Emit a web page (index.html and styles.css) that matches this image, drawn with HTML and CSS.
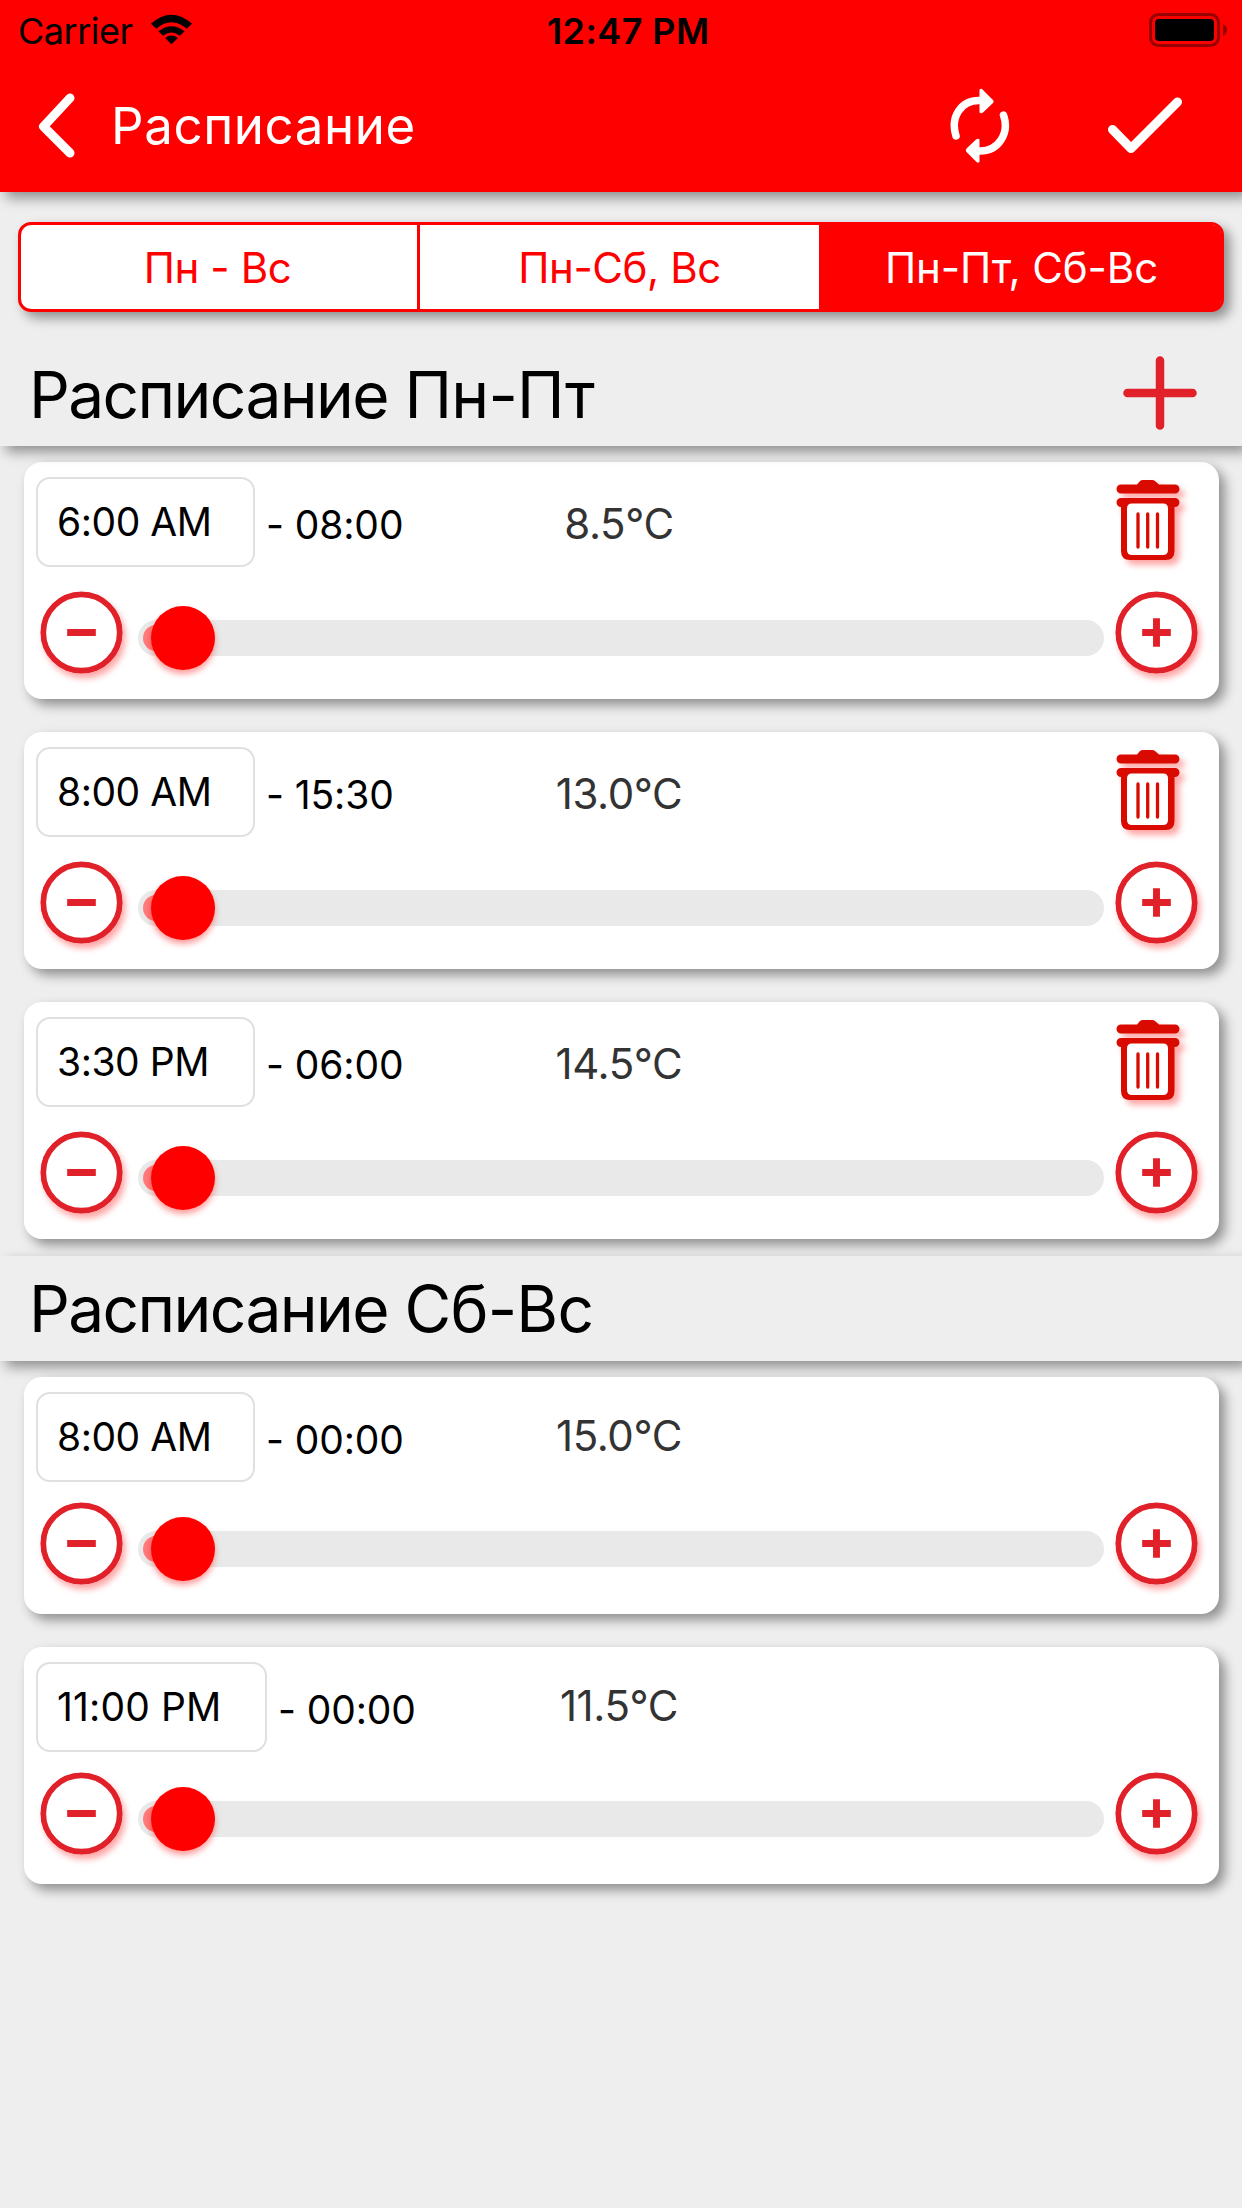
FILE: index.html
```html
<!DOCTYPE html>
<html lang="ru">
<head>
<meta charset="utf-8">
<title>Расписание</title>
<link rel="stylesheet" href="styles.css">
</head>
<body>
<svg class="defs" width="0" height="0" aria-hidden="true">
  <symbol id="minus" viewBox="0 0 84 84"><circle cx="42" cy="42" r="38.7" fill="#fff" stroke="#e12129" stroke-width="5.8"/><path d="M27.500 42h29" stroke="#e12129" stroke-width="7"/></symbol>
  <symbol id="plus" viewBox="0 0 84 84"><circle cx="42" cy="42" r="38.7" fill="#fff" stroke="#e12129" stroke-width="5.8"/><path d="M27.500 42h29M42 27.500v29" stroke="#e12129" stroke-width="7"/></symbol>
  <symbol id="trash" viewBox="0 0 64 82"><rect x="10" y="23" width="43" height="54" fill="#fff"/><path fill="#d90b00" fill-rule="evenodd" d="M5 5.500H21L24 2q1-1 3-1H36q2 0 3 1L43 5.500H59a4.500 4.500 0 0 1 0 9H5a4.500 4.500 0 0 1 0-9ZM5 19H59a4.500 4.500 0 0 1 0 9H58.500V72q0 9-9 9H14q-9 0-9-9V28a4.500 4.500 0 0 1 0-9ZM16 24.500q-5 0-5 5V71q0 5 5 5H47q5 0 5-5V29.500q0-5-5-5Z"/><path d="M22 35v33M31.700 35v33M41.500 35v33" stroke="#d90b00" stroke-width="3.300" stroke-linecap="round"/></symbol>
</svg>

<header class="header">
  <div class="status">
    <div class="carrier"><span class="carrier-name">Carrier</span>
      <svg class="wifi" viewBox="0 0 44 38" preserveAspectRatio="none"><path d="M1 12Q22-8 43 12L37.500 17.500Q22 3 6.500 17.500Z"/><path d="M8.500 20.500Q22 9 35.500 20.500L30.500 25.500Q22 18 13.500 25.500Z"/><path d="M15.500 28Q22 22.500 28.500 28L22 35Z"/></svg>
    </div>
    <div class="clock">12:47 PM</div>
    <svg class="battery" viewBox="0 0 80 42"><rect x="1.500" y="1.500" width="68" height="31" rx="8" fill="none" stroke="#900" stroke-width="3"/><rect x="6" y="6" width="59" height="22" rx="4"/><path d="M74 11q4 2 4 6t-4 6Z" fill="#900"/></svg>
  </div>
  <div class="nav">
    <svg class="back" viewBox="0 0 40 66"><path d="M34 5L7.500 33.500L34 60" /></svg>
    <h1 class="title">Расписание</h1>
    <svg class="refresh" viewBox="0 0 60 76"><g fill="none" stroke="#fff" stroke-width="7.500" stroke-linecap="round"><path d="M6 48C0 29 11 12.500 29 12.500"/><path d="M53.500 27C60 46 48 63 30 63"/></g><path fill="#fff" d="M29.500 1.500q2-1.500 3.500.5L43 12q1.500 1.500 0 3L33 24.500q-2 1.500-3.500 0ZM29.500 74q-2 1.500-3.500-.5L16.500 64q-1.500-1.500 0-3.500L26 51.500q2-1.500 3.500 0Z"/></svg>
    <svg class="check" viewBox="0 0 76 58"><path d="M5.500 32.500L24 51.500L70.500 5"/></svg>
  </div>
</header>

<main>
  <nav class="segments">
    <div class="segment">Пн - Вс</div>
    <div class="segment">Пн-Сб, Вс</div>
    <div class="segment active">Пн-Пт, Сб-Вс</div>
  </nav>

  <section>
    <div class="section-head first"><h2>Расписание <span class="days">Пн-Пт</span></h2><svg class="add" viewBox="0 0 74 74"><path d="M4.500 37h65M37 4.500v65"/></svg></div>
    <div class="cards">
      <article class="card">
        <div class="info"><div class="range"><div class="time">6:00 AM</div><div class="until">- 08:00</div></div><div class="temp">8.5°C</div><svg class="trash"><use href="#trash"/></svg></div>
        <div class="control"><svg class="step"><use href="#minus"/></svg><div class="track"><div class="fill"></div><div class="knob"></div></div><svg class="step"><use href="#plus"/></svg></div>
      </article>
      <article class="card">
        <div class="info"><div class="range"><div class="time">8:00 AM</div><div class="until">- 15:30</div></div><div class="temp">13.0°C</div><svg class="trash"><use href="#trash"/></svg></div>
        <div class="control"><svg class="step"><use href="#minus"/></svg><div class="track"><div class="fill"></div><div class="knob"></div></div><svg class="step"><use href="#plus"/></svg></div>
      </article>
      <article class="card">
        <div class="info"><div class="range"><div class="time">3:30 PM</div><div class="until">- 06:00</div></div><div class="temp">14.5°C</div><svg class="trash"><use href="#trash"/></svg></div>
        <div class="control"><svg class="step"><use href="#minus"/></svg><div class="track"><div class="fill"></div><div class="knob"></div></div><svg class="step"><use href="#plus"/></svg></div>
      </article>
    </div>
  </section>

  <section class="weekend">
    <div class="section-head"><h2>Расписание <span class="days">Сб-Вс</span></h2></div>
    <div class="cards">
      <article class="card">
        <div class="info"><div class="range"><div class="time">8:00 AM</div><div class="until">- 00:00</div></div><div class="temp">15.0°C</div></div>
        <div class="control"><svg class="step"><use href="#minus"/></svg><div class="track"><div class="fill"></div><div class="knob"></div></div><svg class="step"><use href="#plus"/></svg></div>
      </article>
      <article class="card">
        <div class="info"><div class="range"><div class="time wide">11:00 PM</div><div class="until">- 00:00</div></div><div class="temp">11.5°C</div></div>
        <div class="control"><svg class="step"><use href="#minus"/></svg><div class="track"><div class="fill"></div><div class="knob"></div></div><svg class="step"><use href="#plus"/></svg></div>
      </article>
    </div>
  </section>
</main>
</body>
</html>
```
FILE: styles.css
```css
* { box-sizing: border-box; }
body { margin: 0; min-height: 2208px; background: #eee; color: #000; font-family: Inter, "Liberation Sans", sans-serif; overflow-x: hidden; }
h1, h2 { margin: 0; font-weight: 400; white-space: nowrap; }
svg { display: block; flex: none; }
.defs { position: absolute; }

.header { height: 192px; background: #f00; box-shadow: 6px 6px 12px rgba(0,0,0,.4); }
.status { display: grid; grid-template-columns: 529px 1fr 80px; height: 60px; padding: 0 13px 0 18px; font-size: 36px; line-height: 62px; }
.carrier { display: flex; gap: 18px; }
.carrier-name { width: 114px; letter-spacing: -.5px; white-space: nowrap; }
.wifi { width: 43px; height: 34px; margin-top: 13px; }
.clock { font-weight: 600; letter-spacing: .4px; white-space: nowrap; }
.battery { width: 80px; height: 42px; margin-top: 13px; }
.nav { display: flex; align-items: flex-start; height: 132px; padding-left: 36px; }
.back { width: 40px; height: 66px; margin-top: 33px; }
.back path, .check path { fill: none; stroke: #fff; stroke-width: 9; stroke-linecap: round; stroke-linejoin: round; }
.title { width: 840px; padding-left: 1px; margin-left: 34px; color: #fff; font-size: 51px; line-height: 131px; letter-spacing: .6px; }
.refresh { width: 60px; height: 76px; margin-top: 28px; }
.check { width: 76px; height: 58px; margin: 37px 0 0 97px; }

.segments { display: grid; grid-template-columns: 396px 402px 402px; height: 90px; margin: 30px 18px 0; border: 3px solid #f00; border-radius: 13px; background: #fff; color: #f00; box-shadow: 6px 6px 12px rgba(0,0,0,.4); font-size: 42px; line-height: 85px; letter-spacing: -.4px; text-align: center; }
.segment:first-child { padding-right: 3px; }
.segment + .segment { border-left: 3px solid #f00; }
.segment.active { background: #f00; color: #fff; border-radius: 0 9px 9px 0; letter-spacing: -.1px; }

.section-head { display: flex; justify-content: space-between; height: 105px; padding: 0 45px 0 29px; background: #eee; box-shadow: 6px 6px 12px rgba(0,0,0,.4); line-height: 105px; }
.section-head h2 { font-size: 64px; letter-spacing: -1.6px; }
.section-head .days { letter-spacing: -.7px; }
.section-head.first { height: 104px; margin-top: 30px; clip-path: inset(0 0 -30px 0); }
.add { width: 74px; height: 74px; margin-top: 14px; }
.add path { stroke: #e12129; stroke-width: 8.5; stroke-linecap: round; }
.cards { display: grid; gap: 33px; padding: 16px 23px 17px 24px; }

.card { height: 237px; padding: 15px 12px 0; background: #fff; border-radius: 18px; box-shadow: 6px 6px 12px rgba(0,0,0,.4); }
.info { display: grid; grid-template-columns: 433px 300px 1fr 91px; height: 90px; white-space: nowrap; }
.range { display: flex; }
.time { width: 219px; height: 90px; padding-left: 19px; border: 2px solid #e0e0e0; border-radius: 14px; font-size: 39px; line-height: 85px; letter-spacing: -.45px; }
.time.wide { width: 231px; letter-spacing: .15px; }
.until { padding: 3px 0 0 11px; font-size: 39px; line-height: 90px; letter-spacing: -.1px; }
.temp { padding-top: 1px; font-size: 42px; line-height: 91px; letter-spacing: -.4px; text-align: center; color: #333; }
.trash { grid-column: 4; width: 64px; height: 82px; margin-top: 2px; filter: drop-shadow(5px 5px 3px rgba(255,0,0,.35)); }
.control { display: flex; padding: 24px 8px 0 4px; }
.step { width: 83px; height: 83px; border-radius: 50%; filter: drop-shadow(3px 5px 3px rgba(255,0,0,.35)); }
.track { position: relative; width: 966px; height: 36px; margin: 29px 11px 0 15px; padding-top: 5px; border-radius: 18px; background: #e9e9e9; }
.fill { width: 60px; height: 26px; margin-left: 5px; border-radius: 13px; background: #ff7b7b; }
.knob { position: absolute; left: 13px; top: -14px; width: 64px; height: 64px; border-radius: 50%; background: #f00; box-shadow: 0 4px 6px rgba(255,0,0,.4); }
.weekend .temp { line-height: 86px; }
.weekend .control { padding-top: 20px; }
```
